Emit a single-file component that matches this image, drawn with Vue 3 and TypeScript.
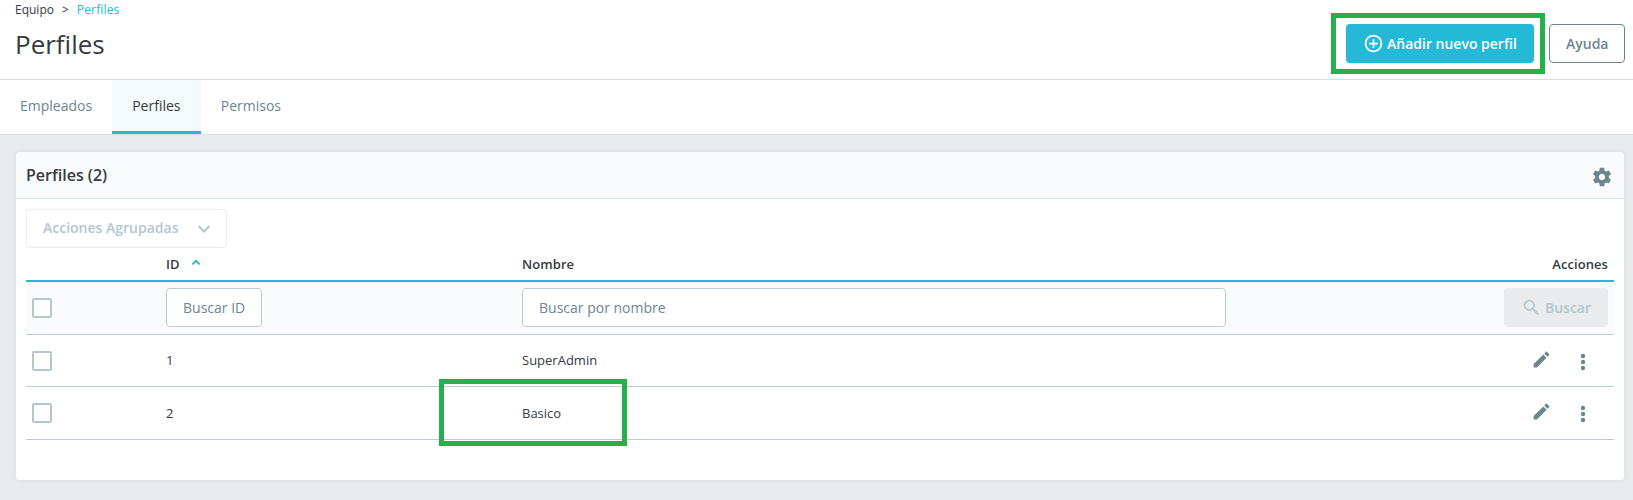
<script setup lang="ts">
interface Perfil {
  id: number
  nombre: string
  marcado: boolean
}

const pestanas: string[] = ['Empleados', 'Perfiles', 'Permisos']
const perfiles: Perfil[] = [
  { id: 1, nombre: 'SuperAdmin', marcado: false },
  { id: 2, nombre: 'Basico', marcado: true },
]
</script>

<template>
  <div class="page">
    <header class="head">
      <div class="head-left">
        <nav class="crumbs">
          <a>Equipo</a><span class="sep">&gt;</span><a class="current">Perfiles</a>
        </nav>
        <h1>Perfiles</h1>
      </div>
      <div class="head-actions">
        <div class="primary-wrap">
          <button class="btn primary">
            <svg width="21" height="21" viewBox="0 0 24 24"><path fill="currentColor" d="M13 7h-2v4H7v2h4v4h2v-4h4v-2h-4V7zm-1-5C6.480 2 2 6.480 2 12s4.480 10 10 10 10-4.480 10-10S17.520 2 12 2zm0 18c-4.410 0-8-3.590-8-8s3.590-8 8-8 8 3.590 8 8-3.590 8-8 8z" /></svg>
            <span>Añadir nuevo perfil</span>
          </button>
        </div>
        <button class="btn help">Ayuda</button>
      </div>
    </header>

    <nav class="tabs">
      <a v-for="p in pestanas" :key="p" class="tab" :class="{ active: p === 'Perfiles' }">{{ p }}</a>
    </nav>

    <main class="main">
      <section class="card">
        <div class="card-head">
          <h3>Perfiles (2)</h3>
          <svg class="gear" width="22" height="22" viewBox="0 0 24 24"><path fill="currentColor" d="M19.430 12.980c.04-.32.07-.64.07-.98s-.03-.66-.07-.98l2.110-1.650c.19-.15.24-.42.12-.64l-2-3.460c-.12-.22-.39-.3-.61-.22l-2.490 1c-.52-.4-1.080-.73-1.690-.98l-.38-2.650C14.460 2.180 14.250 2 14 2h-4c-.25 0-.46.18-.49.42l-.38 2.650c-.61.25-1.170.59-1.690.98l-2.490-1c-.23-.09-.49 0-.61.22l-2 3.460c-.13.22-.07.49.12.64l2.110 1.650c-.04.32-.07.65-.07.98s.03.66.07.98l-2.110 1.650c-.19.15-.24.42-.12.64l2 3.460c.12.22.39.3.61.22l2.490-1c.52.4 1.080.73 1.690.98l.38 2.650c.03.24.24.42.49.42h4c.25 0 .46-.18.49-.42l.38-2.650c.61-.25 1.170-.59 1.690-.98l2.490 1c.23.09.49 0 .61-.22l2-3.460c.12-.22.07-.49-.12-.64l-2.110-1.650zM12 15.500c-1.930 0-3.500-1.570-3.500-3.500s1.570-3.500 3.500-3.500 3.500 1.570 3.500 3.500-1.570 3.500-3.500 3.500z" /></svg>
        </div>
        <div class="card-body">
          <button class="btn bulk">
            <span>Acciones Agrupadas</span>
            <svg width="14" height="10" viewBox="0 0 14 10"><path fill="none" stroke="currentColor" stroke-width="2.100" d="M1.700 2.200l5.300 5.300 5.300-5.300" /></svg>
          </button>

          <div class="row header-row">
            <div></div>
            <div class="cell">ID
              <svg class="sort" width="10" height="7" viewBox="0 0 10 7"><path fill="none" stroke="currentColor" stroke-width="1.900" d="M1.300 5.400L5 1.900l3.700 3.500" /></svg>
            </div>
            <div class="cell">Nombre</div>
            <div class="cell end">Acciones</div>
          </div>

          <div class="row filter-row">
            <div class="cell"><i class="check"></i></div>
            <div class="cell top"><input class="field id-field" type="text" placeholder="Buscar ID" /></div>
            <div class="cell top"><input class="field name-field" type="text" placeholder="Buscar por nombre" /></div>
            <div class="cell top end">
              <button class="btn search">
                <svg width="21" height="21" viewBox="0 0 24 24"><path fill="currentColor" d="M15.500 14h-.79l-.28-.27C15.410 12.590 16 11.110 16 9.500 16 5.910 13.090 3 9.500 3S3 5.910 3 9.500 5.910 16 9.500 16c1.610 0 3.090-.59 4.230-1.570l.27.28v.79l5 4.990L20.490 19l-4.990-5zm-6 0C7.010 14 5 11.990 5 9.500S7.010 5 9.500 5 14 7.010 14 9.500 11.990 14 9.500 14z" /></svg>
                <span>Buscar</span>
              </button>
            </div>
          </div>

          <div v-for="p in perfiles" :key="p.id" class="row data-row" :class="{ marked: p.marcado }">
            <div class="cell"><i class="check"></i></div>
            <div class="cell text">{{ p.id }}</div>
            <div class="cell text name">{{ p.nombre }}</div>
            <div class="cell end icons">
              <svg class="pencil" width="21" height="21" viewBox="0 0 24 24"><path fill="currentColor" d="M3 17.250V21h3.750L17.810 9.940l-3.750-3.750L3 17.250zM20.710 7.040c.39-.39.39-1.020 0-1.410l-2.340-2.340c-.39-.39-1.020-.39-1.410 0l-1.830 1.830 3.750 3.750 1.830-1.830z" /></svg>
              <svg class="dots" width="24" height="24" viewBox="0 0 24 24"><g fill="currentColor"><circle cx="12" cy="6" r="2.200" /><circle cx="12" cy="12" r="2.200" /><circle cx="12" cy="18" r="2.200" /></g></svg>
            </div>
          </div>
        </div>
      </section>
    </main>
  </div>
</template>

<style>
body {
  margin: 0;
  background: #e9ebec;
}
</style>

<style scoped>
.page,
.page *,
.page *::after {
  box-sizing: border-box;
}
.page {
  height: 500px;
  overflow: hidden;
  display: flex;
  flex-direction: column;
  background: #e9ebec;
  color: #363a41;
  font-family: "Open Sans", "Noto Sans", sans-serif;
  font-size: 14px;
}
.head {
  height: 80px;
  flex: none;
  display: flex;
  justify-content: space-between;
  padding: 0 8px 0 15px;
  background: #fff;
  border-bottom: 1px solid #dddddf;
}
.crumbs {
  display: flex;
  padding-top: 1px;
  font-size: 12px;
  line-height: 18px;
}
.sep {
  margin: 0 8px;
}
.current {
  color: #25b9d7;
  letter-spacing: 0.15px;
}
h1 {
  margin: 7px 0 0;
  font-size: 26px;
  line-height: 36px;
  font-weight: 400;
}
.head-actions {
  display: flex;
  gap: 15px;
  padding-top: 24px;
}
.btn {
  height: 39px;
  display: flex;
  align-items: center;
  border: 1px solid transparent;
  border-radius: 4px;
  padding: 0 16px;
  background: #fff;
  font-family: inherit;
  font-size: 14px;
  font-weight: 600;
  white-space: nowrap;
}
.primary-wrap {
  position: relative;
  height: 39px;
}
.primary-wrap::after {
  content: "";
  position: absolute;
  inset: -11px -11px -11px -15px;
  border: 5px solid #24b14d;
}
.primary {
  width: 188px;
  padding: 0 0 0 16px;
  gap: 3px;
  background: #25b9d7;
  color: #fff;
}
.help {
  width: 76px;
  border-color: #6c868e;
  color: #6c868e;
}
.tabs {
  height: 55px;
  flex: none;
  display: flex;
  background: #fff;
  border-bottom: 1px solid #dddddf;
}
.tab {
  padding: 0 20px;
  line-height: 52px;
  color: #6c868e;
}
.tab.active {
  width: 88.600px;
  background: #f4f9fb;
  color: #363a41;
  border-bottom: 3px solid #25b9d7;
}
.main {
  padding: 17px 9px 0 16px;
}
.card {
  height: 328px;
  background: #fff;
  border-radius: 4px;
  box-shadow: 0 0 0 1px #dfe7e8, 0 0 4px 1px rgba(0, 0, 0, 0.05);
}
.card-head {
  height: 47px;
  display: flex;
  align-items: center;
  justify-content: space-between;
  padding: 0 11px 0 10px;
  background: #fafbfc;
  border-bottom: 1px solid #dbe6e9;
  border-radius: 4px 4px 0 0;
}
h3 {
  margin: 0;
  font-size: 16px;
  font-weight: 600;
}
.gear {
  color: #6c868e;
  margin-top: 4px;
}
.card-body {
  padding: 10px 10px 0;
}
.bulk {
  width: 201px;
  justify-content: space-between;
  padding: 0 15px 2px 16px;
  border-color: #eaebec;
  color: #b3c7cd;
}
.bulk svg {
  margin-top: 3px;
}
.row {
  display: grid;
  grid-template-columns: 134px 356px 1fr 140px;
  padding: 0 6px;
}
.cell {
  display: flex;
  align-items: center;
}
.end {
  justify-content: flex-end;
}
.header-row {
  height: 34px;
  border-bottom: 2px solid #25b9d7;
  font-size: 13px;
  font-weight: 600;
  letter-spacing: 0.08px;
}
.sort {
  margin: 0 0 3px 11px;
  color: #25b9d7;
}
.filter-row {
  height: 53px;
  background: #fafbfc;
  border-bottom: 1px solid #bbcdd2;
}
.filter-row .top {
  align-items: flex-start;
  padding-top: 6px;
}
.check {
  width: 20px;
  height: 20px;
  border: 2px solid #b3c7cd;
  border-radius: 2px;
  background: #fff;
}
.field {
  height: 39px;
  padding: 0 16px;
  border: 1px solid #bbcdd2;
  border-radius: 4px;
  background: #fff;
  font-family: inherit;
  font-size: 14px;
}
.field::placeholder {
  color: #6c868e;
  opacity: 1;
}
.id-field {
  width: 96px;
}
.name-field {
  width: 704px;
}
.search {
  width: 104px;
  gap: 3px;
  background: #eaebec;
  color: #b3c7cd;
}
.search svg {
  margin-bottom: 1px;
}
.data-row {
  height: 52px;
  border-bottom: 1px solid #bbcdd2;
}
.data-row.marked {
  height: 53px;
}
.text {
  padding-bottom: 2px;
  font-size: 13px;
}
.marked .text {
  padding-bottom: 0;
}
.marked .name {
  position: relative;
}
.marked .name::after {
  content: "";
  position: absolute;
  left: -83px;
  top: -8px;
  width: 188px;
  height: 67px;
  border: 5px solid #24b14d;
}
.icons {
  color: #6c868e;
  gap: 19px;
  padding-right: 13px;
}
.pencil {
  margin-bottom: 2px;
}
.dots {
  margin-top: 2px;
}
.marked .pencil {
  margin-bottom: 3px;
}
.marked .dots {
  margin-top: 1px;
}
</style>
